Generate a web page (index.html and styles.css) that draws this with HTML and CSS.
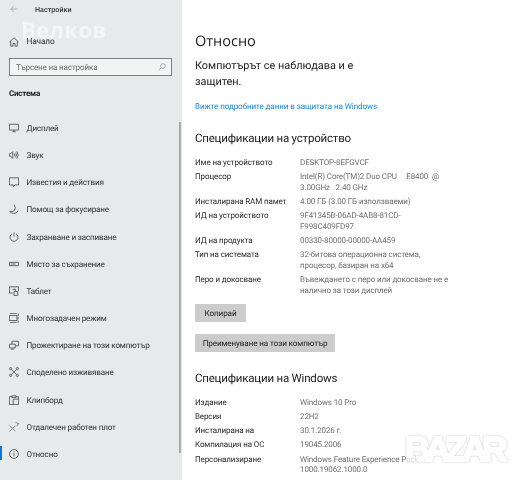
FILE: index.html
```html
<!DOCTYPE html>
<html lang="bg">
<head>
<meta charset="utf-8">
<title>Настройки</title>
<link rel="stylesheet" href="styles.css">
</head>
<body>
<div class="app">
  <aside class="side">
    <div class="watermark">Велков</div>
    <div class="scrollbar"></div>
    <header class="titlebar">
      <svg class="back" viewBox="0 0 10 10"><path d="M9.500 5H1M4.600 1.400 1 5l3.600 3.600"/></svg>
      <span>Настройки</span>
    </header>
    <div class="nav-item home">
      <svg class="ico" viewBox="0 0 12 12"><path d="M.6 6 6 .9 11.400 6M2 5v6h2.800V7.600h2.400V11H10V5"/></svg>
      <span>Начало</span>
    </div>
    <div class="search">
      <span>Търсене на настройка</span>
      <svg class="search-ico" viewBox="0 0 10 10"><circle cx="6.200" cy="3.800" r="3"/><path d="M4 6 .8 9.300"/></svg>
    </div>
    <div class="section">Система</div>
    <nav class="nav">
      <div class="nav-item"><svg class="ico" viewBox="0 0 12 12"><path d="M.5 1.500h11v7H.500zM4 10.500h4M6 8.500v2"/></svg><span>Дисплей</span></div>
      <div class="nav-item"><svg class="ico" viewBox="0 0 12 12"><path d="M.5 4.500h1.500L4.500 2v8L2 7.500H.500zM6.500 4.500q1 1.500 0 3M8 3q2 3 0 6M9.500 1.500q3 4.500 0 9"/></svg><span>Звук</span></div>
      <div class="nav-item"><svg class="ico" viewBox="0 0 12 12"><path d="M.5 1h11v8.500H7.500L5 11.500V9.500H.500z"/></svg><span>Известия и действия</span></div>
      <div class="nav-item"><svg class="ico" viewBox="0 0 12 12"><path d="M6 .8q3 3.700.700 6.700Q4.500 10 1 8.800q1.500 2.700 4.500 2.700 4 0 5.500-3.500"/></svg><span>Помощ за фокусиране</span></div>
      <div class="nav-item"><svg class="ico" viewBox="0 0 12 12"><path d="M6 .5v5M3.500 2.200a4.800 4.800 0 1 0 5 0"/></svg><span>Захранване и заспиване</span></div>
      <div class="nav-item"><svg class="ico" viewBox="0 0 12 12"><path d="M.5 4h11v4H.500zM2 6h6"/></svg><span>Място за съхранение</span></div>
      <div class="nav-item"><svg class="ico" viewBox="0 0 12 12"><path d="M4.500 8.500H.500V1h11v5M6 6.500h4.500v5H6zM4 4h4v2"/></svg><span>Таблет</span></div>
      <div class="nav-item"><svg class="ico" viewBox="0 0 12 12"><path d="M1 .5h8M1 11.500h8M.5 3h9v6h-9zM11 .5v3M11 5v2.500M11 9v2.500"/></svg><span>Многозадачен режим</span></div>
      <div class="nav-item"><svg class="ico" viewBox="0 0 12 12"><path d="M3.500 5V1.500h8V7H8M.5 5h7v4.500h-7zM2 11h4"/></svg><span>Прожектиране на този компютър</span></div>
      <div class="nav-item"><svg class="ico" viewBox="0 0 12 12"><path d="m3 3 6 6M9 3 3 9"/><circle cx="2" cy="2" r="1.400"/><circle cx="10" cy="2" r="1.400"/><circle cx="2" cy="10" r="1.400"/><circle cx="10" cy="10" r="1.400"/></svg><span>Споделено изживяване</span></div>
      <div class="nav-item"><svg class="ico" viewBox="0 0 12 12"><path d="M3.500 2H.500v9.500h11V2h-3M3.500 3V1H5q1-1 2 0h1.500v2zM5 5h6.500M5 5v6.500"/></svg><span>Клипборд</span></div>
      <div class="nav-item"><svg class="ico thin" viewBox="0 0 12 12"><path d="M.5 11.500 7.500 4.500M.5 4l7 7M8 .8l3.500 1L9.500 5"/></svg><span>Отдалечен работен плот</span></div>
      <div class="nav-item current"><svg class="ico" viewBox="0 0 12 12"><circle cx="6" cy="6" r="5.300"/><path d="M6 5.200v3.500M6 3v1.200"/></svg><span>Относно</span></div>
    </nav>
  </aside>
  <main class="main">
    <h1>Относно</h1>
    <p class="status">Компютърът се наблюдава и е защитен.</p>
    <a class="link">Вижте подробните данни в защитата на Windows</a>
    <h2 class="dev-head">Спецификации на устройство</h2>
    <dl class="specs">
      <dt>Име на устройството</dt><dd>DESKTOP-8EFGVCF</dd>
      <dt>Процесор</dt><dd>Intel(R) Core(TM)2 Duo CPU &nbsp; &nbsp; E8400 &nbsp;@<br>3.00GHz &nbsp; 2.40 GHz</dd>
      <dt>Инсталирана RAM памет</dt><dd>4.00 ГБ (3.00 ГБ използваеми)</dd>
      <dt>ИД на устройството</dt><dd>9F41345B-06AD-4AB8-81CD-<br>F998C409FD97</dd>
      <dt>ИД на продукта</dt><dd>00330-80000-00000-AA459</dd>
      <dt>Тип на системата</dt><dd>32-битова операционна система,<br>процесор, базиран на x64</dd>
      <dt>Перо и докосване</dt><dd>Въвеждането с перо или докосване не е<br>налично за този дисплей</dd>
    </dl>
    <button class="btn copy">Копирай</button>
    <button class="btn rename">Преименуване на този компютър</button>
    <h2 class="win-head">Спецификации на Windows</h2>
    <dl class="specs win-specs">
      <dt>Издание</dt><dd>Windows 10 Pro</dd>
      <dt>Версия</dt><dd>22H2</dd>
      <dt>Инсталирана на</dt><dd>30.1.2026 г.</dd>
      <dt>Компилация на ОС</dt><dd>19045.2006</dd>
      <dt>Персонализиране</dt><dd>Windows Feature Experience Pack<br>1000.19062.1000.0</dd>
    </dl>
  </main>
  <div class="bazar">BAZAR</div>
</div>
</body>
</html>
```
FILE: styles.css
```css
* { box-sizing: border-box; margin: 0; padding: 0; }
html, body { width: 516px; height: 480px; overflow: hidden; background: #fff; }
body { font-family: Roboto, "Open Sans", sans-serif; color: #1f1f1f; text-rendering: geometricPrecision; }
.app { position: relative; display: flex; width: 516px; height: 480px; overflow: hidden; filter: blur(.3px); }

.side { position: relative; flex: 0 0 182px; height: 480px; background: #e7eaeb; padding-top: 1px; }
.watermark { position: absolute; left: 21px; top: 17px; font: 700 22px/26px "Open Sans", sans-serif; color: #f4f5f6; letter-spacing: .4px; }
.scrollbar { position: absolute; left: 179px; top: 122px; width: 2px; height: 331px; background: #a9abac; }
.titlebar { position: relative; display: flex; align-items: center; height: 16px; padding-left: 10px; font-size: 7.200px; gap: 17px; }
.titlebar span { font-weight: 500; color: #333; }
.back { width: 8px; height: 8px; fill: none; stroke: #a4a6a7; stroke-width: 1; }

.nav-item { position: relative; display: flex; align-items: center; gap: 7.500px; height: 27.200px; padding-left: 9px; font-size: 8.100px; letter-spacing: -.17px; color: #303030; white-space: nowrap; }
.home { margin-top: 11px; font-size: 8.300px; }
.ico { flex: 0 0 10px; width: 10px; height: 10px; fill: none; stroke: #3a3a3a; stroke-width: .9; }
.thin { stroke: #666; }
.current::before { content: ""; position: absolute; left: 0; top: 6px; width: 2px; height: 14px; background: #0a78d7; }

.search { position: relative; display: flex; align-items: center; justify-content: space-between; width: 163px; height: 18px; margin: 3px 0 0 9px; padding: 0 5px 0 6px; background: #f2f3f3; border: 1px solid #7d7f80; font-size: 8.100px; letter-spacing: -.17px; color: #6c6c6c; }
.search-ico { width: 8px; height: 8px; fill: none; stroke: #8b8b8b; stroke-width: .8; }
.section { position: relative; margin: 11px 0 13px 9px; height: 14px; line-height: 14px; font-size: 8px; letter-spacing: -.2px; font-weight: 700; color: #222; }

.main { flex: 1; padding: 31px 0 0 13px; min-width: 0; }
h1 { font-family: "Open Sans", sans-serif; font-weight: 400; font-size: 14.500px; line-height: 21px; color: #222; }
.status { width: 168px; margin-top: 6px; font-size: 10.900px; line-height: 16px; color: #222; }
.link { display: block; margin-top: 10px; font-size: 8.100px; letter-spacing: -.11px; line-height: 13px; color: #1c86d2; }
h2 { font-weight: 400; font-size: 11.500px; letter-spacing: -.2px; line-height: 16px; color: #222; }
.dev-head { margin-top: 17px; }
.win-head { margin-top: 17.500px; }
.specs { display: grid; grid-template-columns: 105px 1fr; margin: 12px 0 0; font-size: 8px; letter-spacing: -.115px; line-height: 10.500px; row-gap: 3.750px; }
.win-specs { margin-top: 12px; }
dt { color: #2a2a2a; white-space: nowrap; }
dd { color: #6f6f6f; white-space: nowrap; }
.btn { display: block; height: 18px; border: 0; background: #cccccc; font: 8.100px/18px Roboto, sans-serif; letter-spacing: -.11px; color: #222; text-rendering: geometricPrecision; }
.copy { width: 51px; margin-top: 8px; }
.rename { width: 140px; margin-top: 12px; }
.bazar { position: absolute; left: 405px; top: 431px; font: 700 35px/38px "Liberation Sans", sans-serif; letter-spacing: -5px; color: #fff; -webkit-text-stroke: 2px #fff; opacity: .75; filter: drop-shadow(0 0 1px #b4b4b4); }
```
